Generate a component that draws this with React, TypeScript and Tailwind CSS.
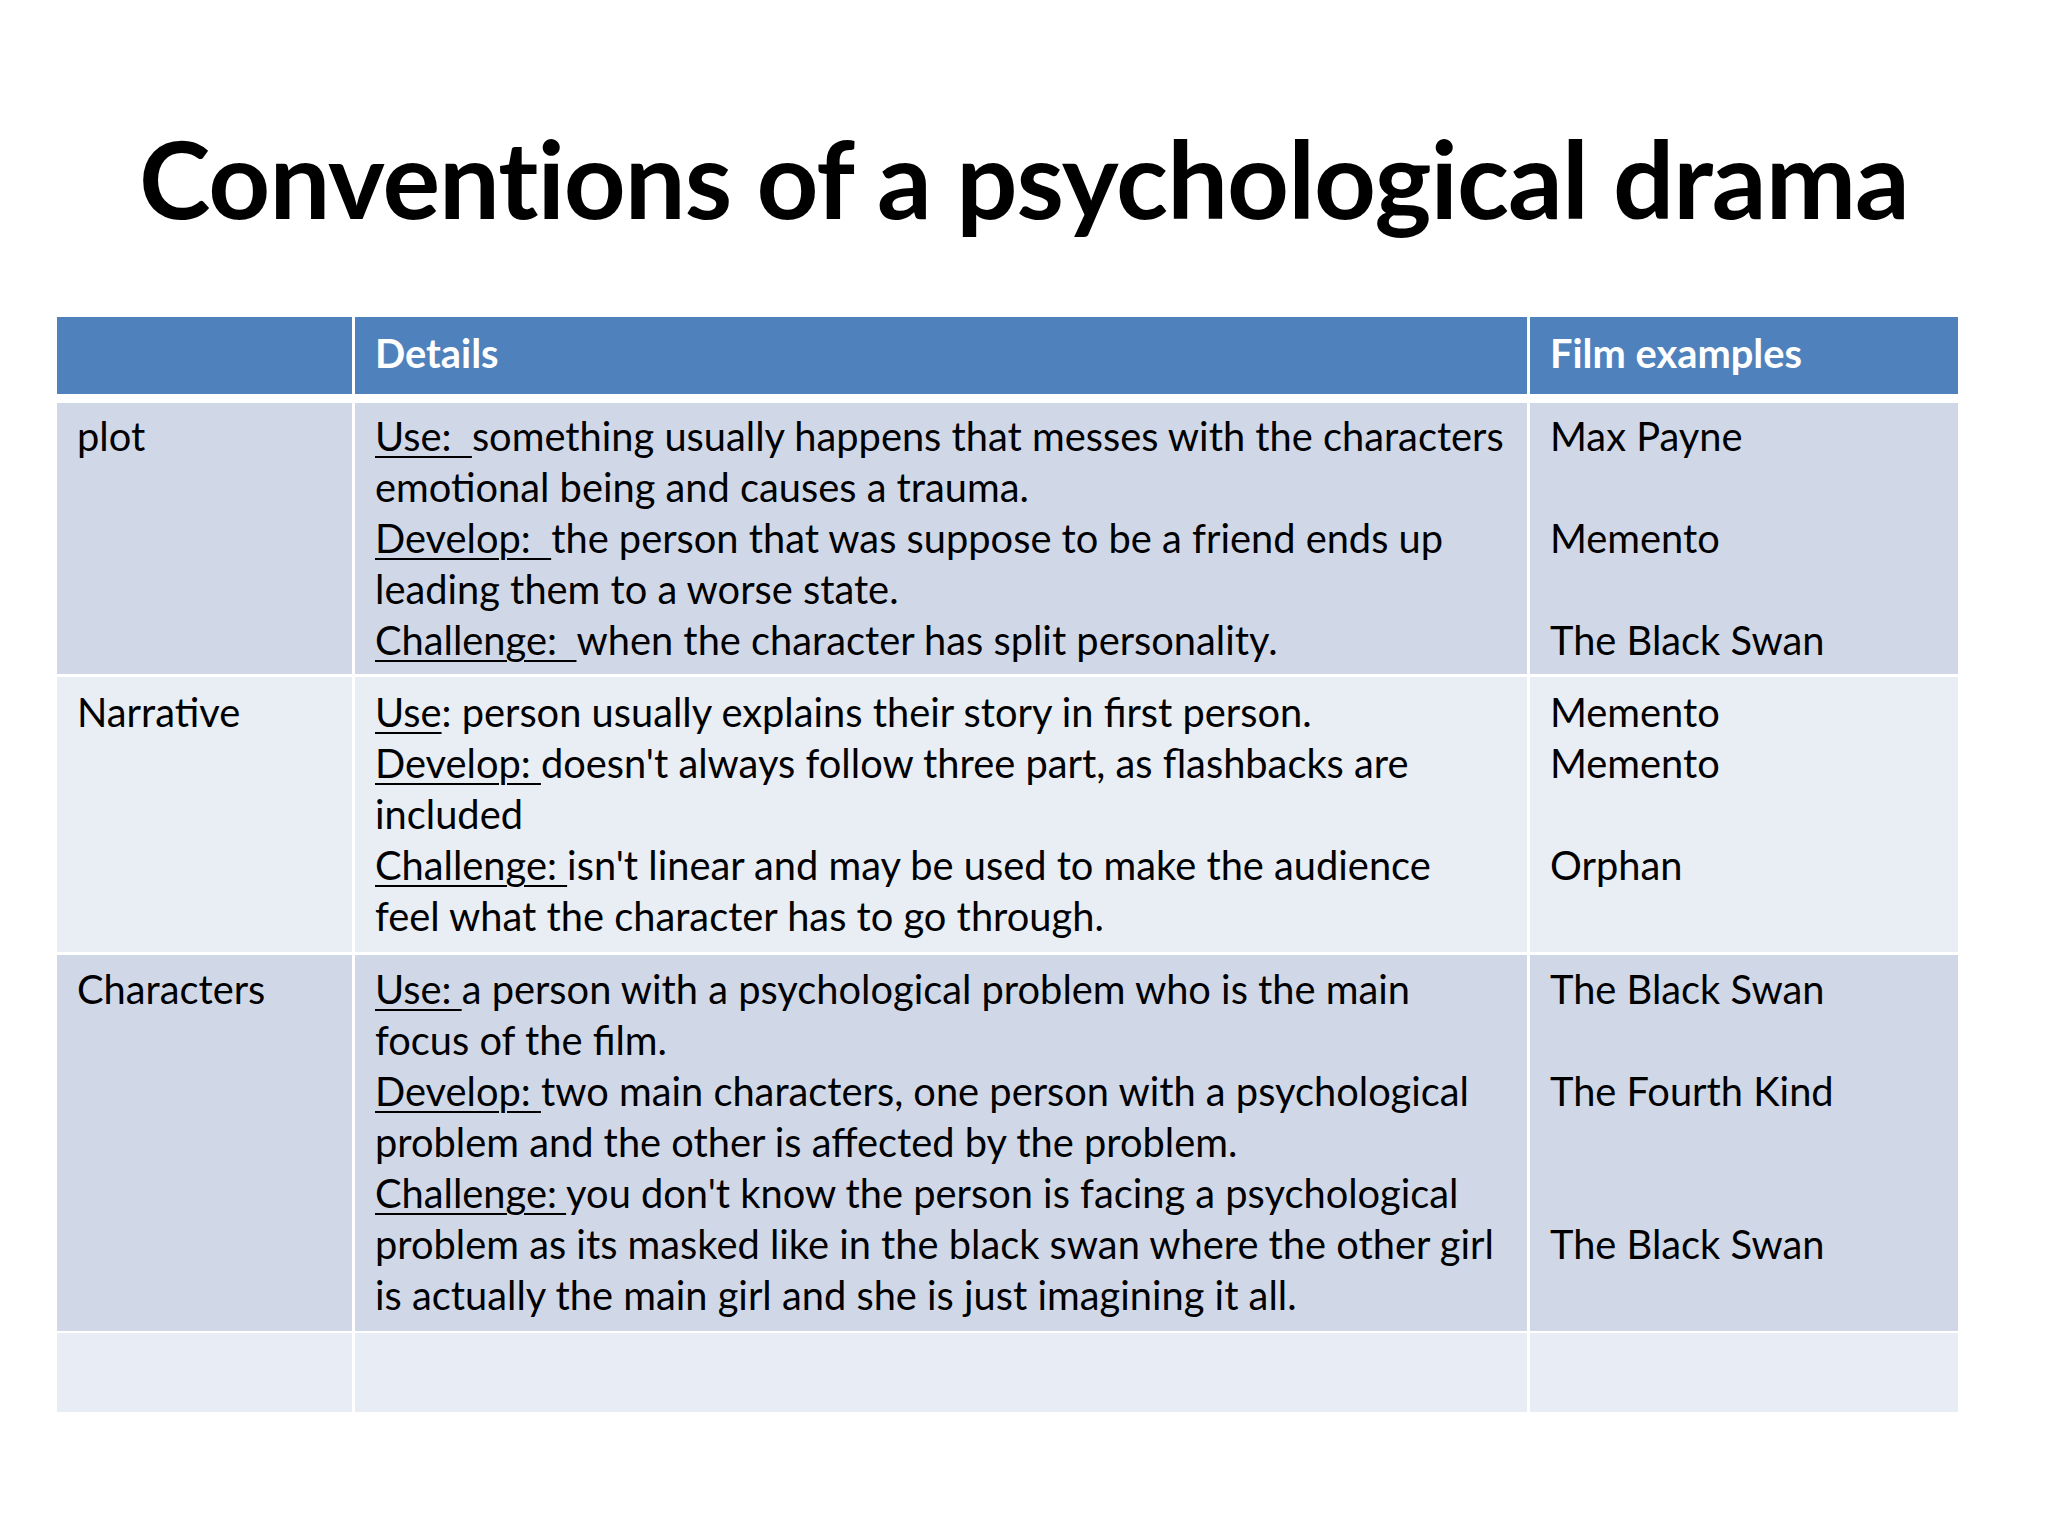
const rows = [
  {
    label: "plot",
    band: "bg-[#d0d8e8]",
    height: "h-[271px]",
    pad: "pt-[7px]",
    details: [
      [<u key="u">Use:&nbsp; </u>, "something usually happens that messes with the characters"],
      ["emotional being and causes a trauma."],
      [<u key="u">Develop:&nbsp; </u>, "the person that was suppose to be a friend ends up"],
      ["leading them to a worse state."],
      [<u key="u">Challenge:&nbsp; </u>, "when the character has split personality."],
    ],
    films: ["Max Payne", "", "Memento", "", "The Black Swan"],
  },
  {
    label: "Narrative",
    band: "bg-[#e9edf4]",
    height: "h-[275px]",
    pad: "pt-[9px]",
    details: [
      [<u key="u">Use</u>, ": person usually explains their story in first person."],
      [<u key="u">Develop: </u>, "doesn't always follow three part, as flashbacks are"],
      ["included"],
      [<u key="u">Challenge: </u>, "isn't linear and may be used to make the audience"],
      ["feel what the character has to go through."],
    ],
    films: ["Memento", "Memento", "", "Orphan"],
  },
  {
    label: "Characters",
    band: "bg-[#d0d8e8]",
    height: "h-[376px]",
    pad: "pt-[8px]",
    details: [
      [<u key="u">Use: </u>, "a person with a psychological problem who is the main"],
      ["focus of the film."],
      [<u key="u">Develop: </u>, "two main characters, one person with a psychological"],
      ["problem and the other is affected by the problem."],
      [<u key="u">Challenge: </u>, "you don't know the person is facing a psychological"],
      ["problem as its masked like in the black swan where the other girl"],
      ["is actually the main girl and she is just imagining it all."],
    ],
    films: ["The Black Swan", "", "The Fourth Kind", "", "", "The Black Swan"],
  },
];

export default function App() {
  return (
    <div
      className="w-[2048px] h-[1536px] bg-white text-black overflow-hidden"
      style={{ fontFamily: "Lato, 'Open Sans', sans-serif" }}
    >
      <h1 className="pt-[123px] text-center text-[108px] leading-none font-bold tracking-[-1px]">
        Conventions of a psychological drama
      </h1>

      <div className="mt-[86px] ml-[57px] w-[1901px] flex flex-col text-[39.8px] leading-[51px]">
        <div className="grid grid-cols-[295px_1172px_428px] gap-x-[3px] h-[77px] font-bold text-white">
          <div className="bg-[#4f81bd]" />
          <div className="bg-[#4f81bd] px-[20px] pt-[10px]">Details</div>
          <div className="bg-[#4f81bd] px-[20px] pt-[10px]">Film examples</div>
        </div>

        {rows.map((row, i) => (
          <div
            key={row.label}
            className={`grid grid-cols-[295px_1172px_428px] gap-x-[3px] ${row.height} ${i === 0 ? "mt-[9px]" : "mt-[3px]"}`}
          >
            <div className={`${row.band} ${row.pad} px-[20px] whitespace-nowrap`}>{row.label}</div>
            <div className={`${row.band} ${row.pad} px-[20px] whitespace-nowrap`}>
              {row.details.map((line, j) => (
                <div key={j} className="h-[51px] [&_u]:underline-offset-[5px] [&_u]:decoration-2">
                  {line}
                </div>
              ))}
            </div>
            <div className={`${row.band} ${row.pad} px-[20px] whitespace-nowrap`}>
              {row.films.map((film, j) => (
                <div key={j} className="h-[51px]">
                  {film}
                </div>
              ))}
            </div>
          </div>
        ))}

        <div className="grid grid-cols-[295px_1172px_428px] gap-x-[3px] h-[79px] mt-[2px]">
          <div className="bg-[#e8ecf5]" />
          <div className="bg-[#e8ecf5]" />
          <div className="bg-[#e8ecf5]" />
        </div>
      </div>
    </div>
  );
}
